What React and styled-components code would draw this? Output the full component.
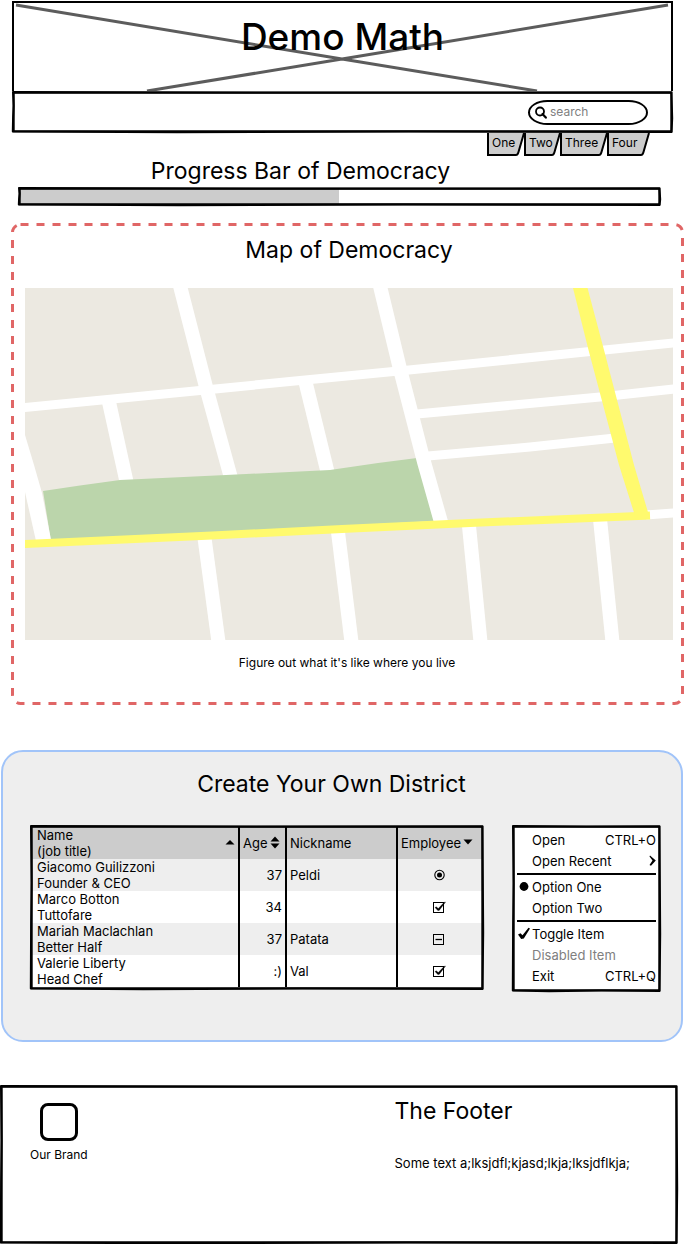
import React, { useEffect, useRef } from "react";
import styled, { createGlobalStyle, css } from "styled-components";

const Global = createGlobalStyle`
  * { box-sizing: border-box; }
  body {
    margin: 0;
    background: #fff;
    color: #000;
    font-family: Inter, "Open Sans", sans-serif;
    font-size: 13px;
    line-height: 16px;
  }
  button, input, progress { font: inherit; color: inherit; }
`;

const Page = styled.div`
  display: flex;
  flex-direction: column;
`;

const FrameSvg = styled.svg`
  position: absolute;
  inset: 0;
  z-index: 1;
  width: 100%;
  height: 100%;
  overflow: visible;
  pointer-events: none;
  path { vector-effect: non-scaling-stroke; }
`;

const Header = styled.header`
  margin: 1px 11px 0 12px;
`;

const Banner = styled.div`
  position: relative;
  height: 90px;
  padding-top: 12px;
  border: 2px solid #000;
  border-bottom: 0;
`;

const BannerCross = styled.svg`
  position: absolute;
  inset: 0;
  width: 100%;
  height: 100%;
`;

const SiteTitle = styled.h1`
  position: relative;
  margin: 0;
  text-align: center;
  font-size: 37px;
  line-height: 44px;
  font-weight: 500;
`;

const SearchBar = styled.div`
  position: relative;
  display: flex;
  justify-content: flex-end;
  align-items: center;
  height: 42px;
  padding-right: 25px;
`;

const SearchField = styled.label`
  display: flex;
  align-items: center;
  gap: 3px;
  width: 120px;
  height: 25px;
  padding: 0 8px 0 5px;
  border: 2px solid #000;
  border-radius: 20px / 13px;
`;

const SearchInput = styled.input`
  flex: 1;
  min-width: 0;
  height: 20px;
  padding: 0 0 2px;
  border: 0;
  outline: 0;
  background: transparent;
  font-size: 12px;
  &::placeholder { color: #808080; opacity: 1; }
`;

const Tabs = styled.nav`
  display: grid;
  grid-template-columns: 37px 36px 47px 42px;
  justify-content: end;
  padding-right: 24px;
`;

const Tab = styled.button`
  display: flex;
  height: 23px;
  padding: 0;
  border: 0;
  background: none;
  font-size: 12px;
  line-height: 20px;
`;

const TabLabel = styled.span`
  flex: 1;
  min-width: 0;
  height: 23px;
  padding-left: 3px;
  border-left: 2px solid #000;
  border-bottom: 2px solid #000;
  background: #ccc;
  text-align: left;
  white-space: nowrap;
  overflow: visible;
`;

const TabEdge = styled.svg`
  flex: none;
  width: 8px;
  height: 23px;
  overflow: visible;
`;

const TabText = styled.span`
  position: relative;
  z-index: 1;
`;

const Heading = styled.h2`
  margin: 0;
  text-align: ${(p) => p.$align || "center"};
  font-size: 23px;
  line-height: 28px;
  font-weight: 400;
`;

const ProgressSection = styled.section`
  margin: 1px 23px 0 18px;
`;

const ProgressTitle = styled.div`
  padding-right: 78px;
`;

const ProgressBox = styled.div`
  position: relative;
  margin-top: 2px;
  padding: 2px 4px 2px 2px;
`;

const Progress = styled.progress`
  display: block;
  appearance: none;
  width: 100%;
  height: 15px;
  border: 0;
  background: #fff;
  &::-webkit-progress-bar { background: #fff; }
  &::-webkit-progress-value { background: #ccc; }
`;

const MapSection = styled.section`
  position: relative;
  margin: 17px 0 0 11px;
  padding: 13px 11px 34px 14px;
`;

const DashedFrame = styled.svg`
  position: absolute;
  inset: 0;
  width: 100%;
  height: 100%;
  pointer-events: none;
`;

const MapDrawing = styled.svg`
  display: block;
  width: 100%;
  height: auto;
  margin-top: 24px;
`;

const Caption = styled.p`
  margin: 15px 0 0;
  padding-right: 4px;
  text-align: center;
  font-size: 12px;
  line-height: 16px;
`;

const District = styled.section`
  margin: 45px 1px 0;
  padding: 18px 20px 48px 27px;
  border: 2px solid #a1c4f9;
  border-radius: 22px 24px 22px 22px;
  background: #eee;
`;

const DistrictTitle = styled.div`
  padding-right: 28px;
`;

const DistrictBody = styled.div`
  display: flex;
  align-items: flex-start;
  gap: 28px;
  margin-top: 27px;
`;

const TableBox = styled.div`
  position: relative;
  flex: 1;
  min-width: 0;
  padding: 2px 2px 3px;
  background: #fff;
`;

const Table = styled.table`
  width: 100%;
  border-collapse: collapse;
  table-layout: fixed;
`;

const Column = styled.col`
  width: ${(p) => p.$width};
`;

const Row = styled.tr`
  height: 32px;
  background: ${(p) => p.$fill};
`;

const cell = css`
  padding: 0 3px;
  border-left: 2px solid #000;
  text-align: ${(p) => p.$align || "left"};
  font-weight: 400;
  white-space: nowrap;
  &:first-child { border-left: 0; padding-left: 5px; }
`;

const HeadCell = styled.th`
  ${cell}
`;

const Cell = styled.td`
  ${cell}
`;

const HeadContent = styled.div`
  display: flex;
  align-items: center;
  justify-content: ${(p) => (p.$spread ? "space-between" : "flex-start")};
  gap: 2px;
`;

const Sort = styled.svg`
  flex: none;
  width: 10px;
  height: 14px;
`;

const Mark = styled.label`
  position: relative;
  display: block;
  width: 16px;
  height: 16px;
  margin: 0 auto;
  svg { display: block; width: 16px; height: 16px; }
`;

const HiddenInput = styled.input`
  position: absolute;
  inset: 0;
  width: 100%;
  height: 100%;
  margin: 0;
  opacity: 0;
`;

const Menu = styled.div`
  position: relative;
  flex: none;
  width: 149px;
  height: 167px;
  padding: 4px 5px 0 5px;
  background: #fff;
`;

const menuRow = css`
  position: relative;
  display: flex;
  align-items: center;
  width: 100%;
  height: 21px;
  padding: 0;
  border: 0;
  background: none;
  color: ${(p) => (p.$muted ? "#808080" : "#000")};
  text-align: left;
  white-space: nowrap;
`;

const MenuButton = styled.button`
  ${menuRow}
`;

const MenuChoice = styled.label`
  ${menuRow}
`;

const MenuIcon = styled.span`
  flex: none;
  display: flex;
  width: 15px;
  svg { display: block; }
`;

const MenuText = styled.span`
  flex: 1;
`;

const Divider = styled.hr`
  height: 2px;
  margin: 2px 0 1px;
  border: 0;
  background: #000;
`;

const Footer = styled.footer`
  position: relative;
  display: grid;
  grid-template-columns: 9fr 7fr;
  height: 159px;
  margin: 43px 6px 0 0;
  padding: 12px 0 0 30px;
`;

const Brand = styled.div`
  display: flex;
  flex-direction: column;
  align-items: center;
  gap: 6px;
  justify-self: start;
  align-self: start;
  padding-top: 6px;
  font-size: 12px;
`;

const BrandMark = styled.div`
  width: 38px;
  height: 38px;
  border: 3px solid #000;
  border-radius: 8px;
`;

const FooterText = styled.p`
  margin: 30px 0 0;
  font-size: 13px;
`;

/* Hand-drawn outline: a straight stroke and a slightly skewed one over it. */
function SketchFrame({ w, h }) {
  return (
    <FrameSvg viewBox={`0 0 ${w} ${h}`} preserveAspectRatio="none" aria-hidden="true">
      <path d={`M1.700 1.700 H${w - 1.7} V${h - 1.7} H1.700Z`} fill="none" stroke="#000" strokeWidth="2" />
      <path
        d={`M1 1 L${w * 0.5} 1.600 L${w - 1.5} 1.200 L${w - 1.2} ${h * 0.3} L${w - 0.8} ${h * 0.65} L${w - 1.4} ${h - 1} L${w * 0.6} ${h - 1.4} L${w * 0.25} ${h - 0.8} L0.800 ${h - 1.4} L1.100 ${h * 0.6} L1.600 ${h * 0.35}Z`}
        fill="none" stroke="#000" strokeWidth="2" strokeLinejoin="round"
      />
    </FrameSvg>
  );
}

function SortIcon({ up, down }) {
  return (
    <Sort viewBox="0 0 10 14" aria-hidden="true">
      {up && <path d={down ? "M0.500 5.500 L5 0.500 L9.500 5.500Z" : "M0.500 8.500 L5 4 L9.500 8.500Z"} />}
      {down && <path d={up ? "M0.500 7.500 L5 12.500 L9.500 7.500Z" : "M0.500 3.500 L5 8.500 L9.500 3.500Z"} />}
    </Sort>
  );
}

function EmployeeMark({ kind, name }) {
  const ref = useRef(null);
  useEffect(() => {
    if (ref.current) ref.current.indeterminate = kind === "mixed";
  }, [kind]);
  return (
    <Mark>
      <HiddenInput
        ref={ref}
        type={kind === "radio" ? "radio" : "checkbox"}
        defaultChecked={kind !== "mixed"}
        aria-label={"Employee: " + name}
      />
      <svg viewBox="0 0 16 16" fill="none" stroke="#000" aria-hidden="true">
        {kind === "radio" ? (
          <>
            <circle cx="7.500" cy="8" r="4.700" strokeWidth="1.100" />
            <circle cx="7.500" cy="8" r="2.500" fill="#000" stroke="none" />
          </>
        ) : (
          <rect x="1.500" y="3.500" width="10" height="10" />
        )}
        {kind === "check" && (
          <path d="M3 8.600 L5.800 11.600 L7.200 11.400 L13.600 3 L12 3.400 L6.300 9.500 L4.200 7.800Z" fill="#000" strokeWidth="0.300" />
        )}
        {kind === "mixed" && <path d="M3.500 8.500 H10" strokeWidth="1.300" />}
      </svg>
    </Mark>
  );
}

const tabs = ["One", "Two", "Three", "Four"];

const people = [
  ["Giacomo Guilizzoni", "Founder & CEO", "37", "Peldi", "radio"],
  ["Marco Botton", "Tuttofare", "34", "", "check"],
  ["Mariah Maclachlan", "Better Half", "37", "Patata", "mixed"],
  ["Valerie Liberty", "Head Chef", ":)", "Val", "check"],
];

function TownMap() {
  return (
    <MapDrawing viewBox="25 288 648 352" role="img" aria-label="Map of streets">
      <rect x="25" y="288" width="648" height="352" fill="#ece9e1" />
      <g fill="none" stroke="#fff" strokeWidth="14">
        <path d="M179 282 L206 387 L231 478" />
        <path d="M109 402 L127 484" />
        <path d="M305 380 L328 474" />
        <path d="M204.500 538 L218.500 642" />
        <path d="M338 532 L351.500 642" />
        <path d="M469 526 L480.500 642" />
        <path d="M600 519 L612.500 642" />
      </g>
      <path d="M43 491 L80 485.500 L120 480 L226 475 L330 470 L378 463 L417 458 L435 521 L51 541Z" fill="#bbd5ab" />
      <path d="M379 282 L400 369 L424 462 L441 522" fill="none" stroke="#fff" strokeWidth="14" />
      <path d="M25 435 L34 465 L42 493 L51 540 L36 541 L25 492Z" fill="#fff" />
      <g fill="none" stroke="#fff" strokeWidth="9">
        <path d="M24 407.500 L205 390 L300 380.500 L409 370 L590 351.500 L674 343" />
        <path d="M417 414 L600 397 L674 389" />
        <path d="M428 456 L530 447 L615 438" />
        <path d="M646 515 L674 513" />
      </g>
      <path d="M24 544 L212 535.500 L342 529 L470 523 L650 515.500" fill="none" stroke="#fffa6e" strokeWidth="8" />
      <path d="M572.500 286 L587 286 L604 350 L634 465 L650 519 L636 519 L619 465 L588.500 350Z" fill="#fffa6e" />
    </MapDrawing>
  );
}

export default function App() {
  return (
    <Page>
      <Global />
      <Header>
        <Banner>
          <BannerCross viewBox="0 0 657 88" preserveAspectRatio="none" aria-hidden="true">
            <path d="M2 2 L328 56 L523 88 M654 2 L328 56 L133 88" fill="none" stroke="#5c5c5c" strokeWidth="3" />
          </BannerCross>
          <SiteTitle>Demo Math</SiteTitle>
        </Banner>
        <SearchBar>
          <SketchFrame w={661} h={42} />
          <SearchField>
            <svg width="12" height="13" viewBox="0 0 12 13" fill="none" stroke="#000" aria-hidden="true">
              <circle cx="5" cy="5.500" r="4" strokeWidth="1.800" />
              <path d="M7.500 8 L10.800 11.600" strokeWidth="2.200" strokeLinecap="round" />
            </svg>
            <SearchInput type="search" placeholder="search" aria-label="Search" />
          </SearchField>
        </SearchBar>
        <Tabs>
          {tabs.map((t) => (
            <Tab key={t} type="button">
              <TabLabel><TabText>{t}</TabText></TabLabel>
              <TabEdge viewBox="0 0 8 23" aria-hidden="true">
                <path d="M0 0 H8 L1.500 21.500 L0 22Z" fill="#ccc" />
                <path d="M8 0 L2.500 19 Q1.800 21.800 0 22" fill="none" stroke="#000" strokeWidth="2" />
              </TabEdge>
            </Tab>
          ))}
        </Tabs>
      </Header>

      <ProgressSection>
        <ProgressTitle><Heading id="progress-title">Progress Bar of Democracy</Heading></ProgressTitle>
        <ProgressBox>
          <SketchFrame w={643} h={19} />
          <Progress value="50" max="100" aria-labelledby="progress-title" />
        </ProgressBox>
      </ProgressSection>

      <MapSection>
        <DashedFrame aria-hidden="true">
          <rect
            x="1.500" y="1.500" rx="8"
            style={{ width: "calc(100% - 3px)", height: "calc(100% - 3px)" }}
            fill="none" stroke="#e06666" strokeWidth="3" strokeDasharray="8 8"
          />
        </DashedFrame>
        <Heading>Map of Democracy</Heading>
        <TownMap />
        <Caption>Figure out what it's like where you live</Caption>
      </MapSection>

      <District>
        <DistrictTitle><Heading>Create Your Own District</Heading></DistrictTitle>
        <DistrictBody>
          <TableBox>
            <SketchFrame w={455} h={165} />
            <Table>
              <colgroup>
                <Column $width="46%" />
                <Column $width="47px" />
                <Column />
                <Column $width="85px" />
              </colgroup>
              <thead>
                <Row $fill="#ccc">
                  <HeadCell scope="col">
                    <HeadContent $spread>
                      <span>Name<br />(job title)</span>
                      <SortIcon up />
                    </HeadContent>
                  </HeadCell>
                  <HeadCell scope="col">
                    <HeadContent>Age<SortIcon up down /></HeadContent>
                  </HeadCell>
                  <HeadCell scope="col">Nickname</HeadCell>
                  <HeadCell scope="col">
                    <HeadContent>Employee<SortIcon down /></HeadContent>
                  </HeadCell>
                </Row>
              </thead>
              <tbody>
                {people.map(([name, job, age, nick, mark], i) => (
                  <Row key={name} $fill={i % 2 ? "#fff" : "#eee"}>
                    <Cell>{name}<br />{job}</Cell>
                    <Cell $align="right">{age}</Cell>
                    <Cell>{nick}</Cell>
                    <Cell><EmployeeMark kind={mark} name={name} /></Cell>
                  </Row>
                ))}
              </tbody>
            </Table>
          </TableBox>

          <Menu>
            <SketchFrame w={149} h={167} />
            <MenuButton type="button"><MenuIcon /><MenuText>Open</MenuText>CTRL+O</MenuButton>
            <MenuButton type="button">
              <MenuIcon /><MenuText>Open Recent</MenuText>
              <svg width="7" height="11" viewBox="0 0 7 11" aria-hidden="true">
                <path d="M1 0.500 L6.800 5.500 L2 10.800 L0.500 10 L3.500 5.500 L0.500 1.500Z" />
              </svg>
            </MenuButton>
            <Divider />
            <MenuChoice>
              <HiddenInput type="radio" name="option" defaultChecked />
              <MenuIcon>
                <svg width="13" height="10" viewBox="0 0 13 10" aria-hidden="true"><circle cx="7" cy="4.500" r="4.400" /></svg>
              </MenuIcon>
              <MenuText>Option One</MenuText>
            </MenuChoice>
            <MenuChoice>
              <HiddenInput type="radio" name="option" />
              <MenuIcon /><MenuText>Option Two</MenuText>
            </MenuChoice>
            <Divider />
            <MenuChoice>
              <HiddenInput type="checkbox" defaultChecked />
              <MenuIcon>
                <svg width="14" height="13" viewBox="0 0 14 13" aria-hidden="true">
                  <path d="M1 7.500 L3.500 6.200 L5.500 8.300 L11.500 0.800 L13 1.500 L6.800 11.500 L4.200 12Z" />
                </svg>
              </MenuIcon>
              <MenuText>Toggle Item</MenuText>
            </MenuChoice>
            <MenuButton type="button" disabled $muted><MenuIcon /><MenuText>Disabled Item</MenuText></MenuButton>
            <MenuButton type="button"><MenuIcon /><MenuText>Exit</MenuText>CTRL+Q</MenuButton>
          </Menu>
        </DistrictBody>
      </District>

      <Footer>
        <SketchFrame w={678} h={159} />
        <Brand><BrandMark />Our Brand</Brand>
        <div>
          <Heading $align="left">The Footer</Heading>
          <FooterText>Some text a;lksjdfl;kjasd;lkja;lksjdflkja;</FooterText>
        </div>
      </Footer>
    </Page>
  );
}
